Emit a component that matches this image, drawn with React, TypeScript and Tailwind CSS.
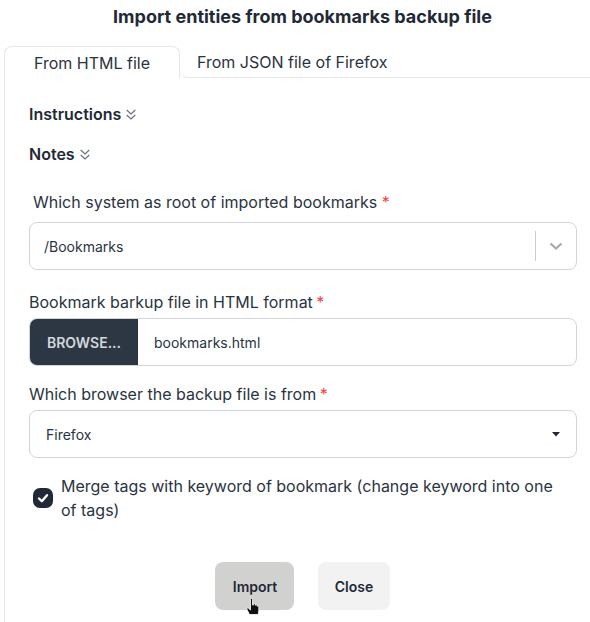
import React from "react";

function Chevrons() {
  return (
    <svg width="10" height="12" viewBox="0 0 10 12" fill="none" stroke="#6b7280" strokeWidth="1.2" className="ml-[5px] mt-[1px]">
      <path d="M.7 1l4.3 4 4.3-4M.7 6l4.3 4 4.3-4" />
    </svg>
  );
}

function Req({ tight }: { tight?: boolean }) {
  return <span className={tight ? "text-[#ef4444] -ml-px" : "text-[#ef4444]"}> *</span>;
}

export default function App() {
  return (
    <div className="w-[590px] h-[622px] overflow-hidden bg-white text-[#2a3441] font-['Inter',sans-serif] text-base">
      <h1 className="h-[46px] pt-[5px] pl-[15px] text-center text-lg leading-6 font-bold text-[#1f2937]">Import entities from bookmarks backup file</h1>
      <div className="flex h-8 pl-1">
        <div className="w-[176px] h-8 border border-b-0 border-[#e5e7eb] rounded-t-lg flex items-center justify-center bg-white">From HTML file</div>
        <div className="flex-1 h-8 border-b border-[#e5e7eb] rounded-bl-lg pl-[17px] flex items-center">From JSON file of Firefox</div>
      </div>
      <div className="ml-1 border-l border-[#e5e7eb] h-[544px] pl-6 pr-[13px] pt-6">
        <div className="h-[24px] flex items-center font-semibold leading-6 text-[#1f2937]">Instructions<Chevrons /></div>
        <div className="h-[24px] mt-[16px] flex items-center font-semibold leading-6 text-[#1f2937]">Notes<Chevrons /></div>
        <div className="mt-[24px] pl-1 leading-6 h-6">Which system as root of imported bookmarks<Req /></div>
        <div className="mt-2 h-12 border border-[#d1d5db] rounded-lg flex items-center text-sm pl-[14px]">
          <span className="flex-1 pt-[1px]">/Bookmarks</span>
          <div className="w-px h-[30px] bg-[#cccccc]" />
          <div className="w-10 flex justify-center">
            <svg width="14" height="10" viewBox="0 0 14 10" fill="none" stroke="#a6a9b2" strokeWidth="2.2"><path d="M1.5 2.5L7 7.5l5.5-5" /></svg>
          </div>
        </div>
        <div className="mt-5 h-6 leading-6">Bookmark barkup file in HTML format<Req tight /></div>
        <div className="mt-1 h-12 border border-[#d1d5db] rounded-lg flex items-center overflow-hidden">
          <div className="w-[108px] h-full pt-[1px] bg-[#2d3643] text-[#d3d7dd] text-sm font-semibold flex items-center justify-center">BROWSE...</div>
          <span className="ml-4 pt-[1px] text-sm">bookmarks.html</span>
        </div>
        <div className="mt-4 h-6 leading-6">Which browser the backup file is from<Req tight /></div>
        <div className="mt-1 h-12 border border-[#d1d5db] rounded-lg flex items-center justify-between text-sm pl-4 pr-4">
          <span className="pt-[1px]">Firefox</span>
          <svg width="8" height="5" viewBox="0 0 8 5" fill="#1f2937"><path d="M0 0h8L4 4.5z" /></svg>
        </div>
        <div className="mt-4 ml-1 flex items-center gap-[8px] leading-6 pr-4">
          <div className="w-5 h-5 rounded-[7px] bg-[#1f2937] flex items-center justify-center shrink-0">
            <svg width="14" height="14" viewBox="0 0 14 14" fill="none" stroke="#fff" strokeWidth="2.4" strokeLinecap="round" strokeLinejoin="round"><path d="M3 7.5l2.8 2.7L11 4.2" /></svg>
          </div>
          <span>Merge tags with keyword of bookmark (change keyword into one of tags)</span>
        </div>
        <div className="mt-[40px] flex justify-center gap-6 text-sm font-semibold text-[#1f2937] pr-[2px]">
          <div className="relative w-[79px] h-12 pt-[1px] pl-[2px] rounded-lg bg-[#d1d2d0] flex items-center justify-center">
            Import
            <svg className="absolute left-[31px] top-[36px]" width="16" height="18" viewBox="0 0 16 18">
              <path d="M4.5 1.5a1 1 0 0 1 2 0V7l1 .1V6a1 1 0 0 1 1.8 0v1.3a1 1 0 0 1 1.7.2v.8a1 1 0 0 1 1.8.4V13l-.6 3.5H3.5L1 11.5c-.5-1 .5-2 1.5-1.2L4.5 12z" fill="#111" stroke="#fff" strokeWidth="0.8" />
            </svg>
          </div>
          <div className="w-[72px] h-12 pt-[1px] pl-[1px] rounded-lg bg-[#f2f2f2] flex items-center justify-center">Close</div>
        </div>
      </div>
    </div>
  );
}
